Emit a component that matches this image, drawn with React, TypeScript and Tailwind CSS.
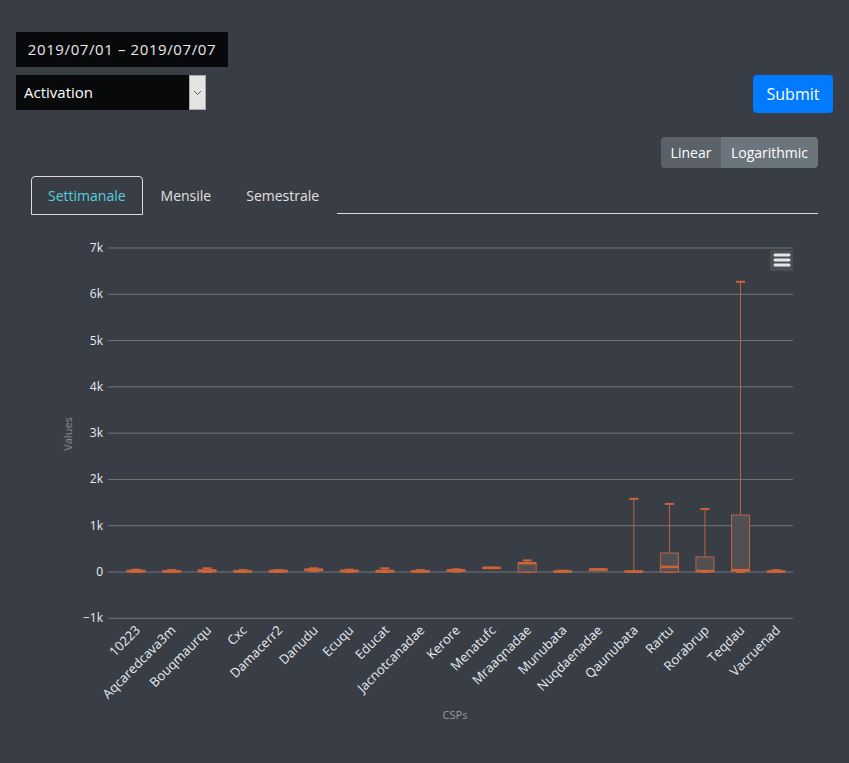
import React, { useState } from "react";

type Box = { name: string; low: number; q1: number; med: number; q3: number; high: number };

const data: Box[] = [
  { name: "10223", low: 0, q1: 5, med: 15, q3: 40, high: 50 },
  { name: "Aqcaredcava3m", low: 0, q1: 5, med: 10, q3: 30, high: 40 },
  { name: "Bouqmaurqu", low: 0, q1: 10, med: 20, q3: 50, high: 80 },
  { name: "Cxc", low: 0, q1: 5, med: 10, q3: 30, high: 40 },
  { name: "Damacerr2", low: 0, q1: 5, med: 15, q3: 40, high: 40 },
  { name: "Danudu", low: 20, q1: 30, med: 50, q3: 60, high: 80 },
  { name: "Ecuqu", low: 0, q1: 10, med: 20, q3: 40, high: 50 },
  { name: "Educat", low: 0, q1: 5, med: 15, q3: 40, high: 80 },
  { name: "Jacnotcanadae", low: 0, q1: 5, med: 10, q3: 30, high: 40 },
  { name: "Kerore", low: 10, q1: 20, med: 30, q3: 50, high: 60 },
  { name: "Menatufc", low: 85, q1: 85, med: 90, q3: 95, high: 95 },
  { name: "Mraaqnadae", low: 0, q1: 0, med: 190, q3: 200, high: 250 },
  { name: "Munubata", low: 0, q1: 5, med: 10, q3: 20, high: 30 },
  { name: "Nuqdaenadae", low: 50, q1: 50, med: 55, q3: 60, high: 60 },
  { name: "Qaunubata", low: 0, q1: 5, med: 10, q3: 20, high: 1580 },
  { name: "Rartu", low: 0, q1: 0, med: 110, q3: 410, high: 1470 },
  { name: "Rorabrup", low: 0, q1: 10, med: 20, q3: 325, high: 1360 },
  { name: "Teqdau", low: 0, q1: 20, med: 40, q3: 1230, high: 6270 },
  { name: "Vacruenad", low: 0, q1: 5, med: 10, q3: 20, high: 40 },
];

const ticks = [7, 6, 5, 4, 3, 2, 1, 0, -1];
const yv = (v: number) => 572 - v * 0.046286;
const cx = (i: number) => 136 + i * 35.56;

const Chart: React.FC = () => (
  <svg
    width={787}
    height={548}
    viewBox="31 215 787 548"
    className="block"
    style={{ fontFamily: "'Open Sans', sans-serif" }}
  >
    {ticks.map((t) => (
      <g key={t}>
        <line x1={108} x2={793} y1={yv(t * 1000)} y2={yv(t * 1000)} stroke="#767676" strokeWidth={1} />
        <text x={103} y={yv(t * 1000) + 4} textAnchor="end" fontSize={12} fill="#e8ecf2">
          {t === 0 ? "0" : t < 0 ? `−${-t}k` : `${t}k`}
        </text>
      </g>
    ))}
    {data.map((d, i) => {
      const x = cx(i);
      return (
        <g key={d.name}>
          <line x1={x} x2={x} y1={yv(d.high)} y2={yv(d.q3)} stroke="#c0633f" strokeWidth={1} />
          <line x1={x} x2={x} y1={yv(d.q1)} y2={yv(d.low)} stroke="#c0633f" strokeWidth={1} />
          <line x1={x - 4.5} x2={x + 4.5} y1={yv(d.high)} y2={yv(d.high)} stroke="#cc6438" strokeWidth={2} />
          <line x1={x - 4.5} x2={x + 4.5} y1={yv(d.low)} y2={yv(d.low)} stroke="#cc6438" strokeWidth={2} />
          <rect
            x={x - 9}
            y={yv(d.q3)}
            width={18}
            height={Math.max(yv(d.q1) - yv(d.q3), 1)}
            fill="#505052"
            stroke="#c0633f"
            strokeWidth={1}
          />
          <line x1={x - 9} x2={x + 9} y1={yv(d.med)} y2={yv(d.med)} stroke="#cc6438" strokeWidth={2.5} />
          <text
            x={x + 5}
            y={631}
            textAnchor="end"
            fontSize={13}
            fill="#e8ecf2"
            transform={`rotate(-45 ${x + 5} 631)`}
          >
            {d.name}
          </text>
        </g>
      );
    })}
    <text x={72} y={434} textAnchor="middle" fontSize={11} fill="#8c8c8c" transform="rotate(-90 72 434)">
      Values
    </text>
    <text x={455} y={719} textAnchor="middle" fontSize={11} fill="#9a9a9a">
      CSPs
    </text>
    <rect x={770} y={250} width={23} height={21} rx={2} fill="#4b4e55" />
    {[255, 260, 265].map((y) => (
      <line key={y} x1={775} x2={789} y1={y} y2={y} stroke="#e6e6e6" strokeWidth={3} strokeLinecap="round" />
    ))}
  </svg>
);

const App: React.FC = () => {
  const [tab, setTab] = useState("Settimanale");
  const [scale, setScale] = useState("Linear");
  const tabs = ["Settimanale", "Mensile", "Semestrale"];

  return (
    <div className="min-h-[763px] bg-[#393d45] px-4 pt-8 font-['Open_Sans',sans-serif]">
      <div className="w-[212px] h-[35px] bg-[#08090b] text-[#e8e8e8] text-[15px] flex items-center justify-center tracking-[0.6px]">
        2019/07/01 – 2019/07/07
      </div>
      <div className="flex justify-between items-start mt-2">
        <div className="flex w-[190px] h-[35px] bg-[#08090b]">
          <div className="flex-1 flex items-center pl-2 text-[15px] text-white">Activation</div>
          <div className="w-[17px] bg-[#e4e4e4] border border-[#a9a9a9] flex items-center justify-center">
            <svg width="9" height="6" viewBox="0 0 9 6">
              <path d="M1 1l3.5 3.5L8 1" stroke="#555" strokeWidth="1" fill="none" />
            </svg>
          </div>
        </div>
        <button className="w-[80px] h-[38px] rounded bg-[#007bff] text-white text-[16px]">Submit</button>
      </div>
      <div className="px-[15px]">
        <div className="flex justify-end mt-[24px]">
          <div className="flex h-[31px] rounded overflow-hidden text-[14px] font-medium text-white">
            {["Linear", "Logarithmic"].map((s) => (
              <button
                key={s}
                onClick={() => setScale(s)}
                className={`${s === "Linear" ? "bg-[#5a6268] w-[60px]" : "bg-[#6c757d] w-[97px]"} ${
                  scale === s ? "" : ""
                }`}
              >
                {s}
              </button>
            ))}
          </div>
        </div>
        <div className="flex items-end mt-2">
          {tabs.map((t) => (
            <button
              key={t}
              onClick={() => setTab(t)}
              className={`h-[39px] px-4 mr-[1px] text-[14px] rounded-t border ${
                tab === t ? "border-[#dcdcdc] text-[#56d0dc]" : "border-transparent text-[#e0e0e0]"
              }`}
            >
              {t}
            </button>
          ))}
          <div className="flex-1 border-b border-[#dcdcdc] h-px mb-px" />
        </div>
        <Chart />
      </div>
    </div>
  );
};

export default App;
